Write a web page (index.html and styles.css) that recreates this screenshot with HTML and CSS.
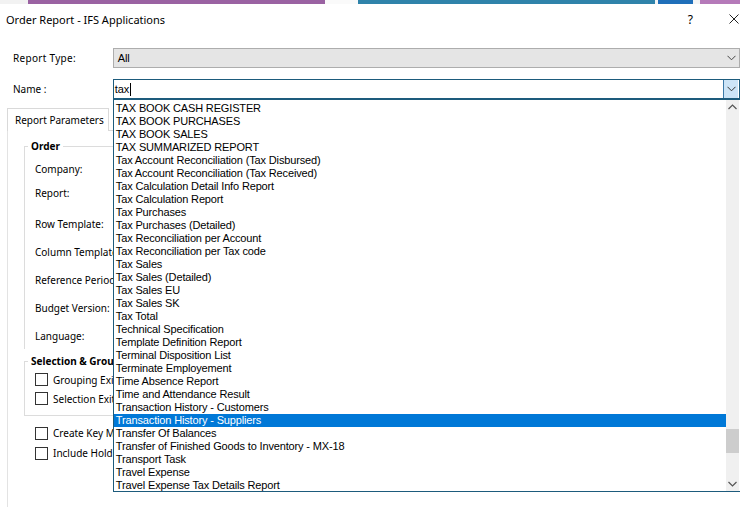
FILE: index.html
```html
<!DOCTYPE html>
<html>
<head>
<meta charset="utf-8">
<link rel="stylesheet" href="styles.css">
</head>
<body>
<div class="strip">
  <span class="seg s1"></span><span class="seg s2"></span><span class="seg s3"></span><span class="seg s4"></span><span class="seg s5"></span><span class="seg s6"></span><span class="seg s7"></span><span class="seg s8"></span>
</div>
<div class="titlebar">
  <span class="title">Order Report - IFS Applications</span>
  <span class="help">?</span>
  <svg class="close" width="10" height="10" viewBox="0 0 10 10"><path d="M0.5 0.5 L9.5 9.5 M9.5 0.5 L0.5 9.5" stroke="#222" stroke-width="1" fill="none"/></svg>
</div>
<div class="form">
  <div class="row row-type">
    <span class="lbl">Report Type:</span>
    <div class="combo combo-type">
      <span class="val">All</span>
      <svg class="chev" width="9" height="6" viewBox="0 0 9 6"><path d="M0.5 0.8 L4.5 4.8 L8.5 0.8" stroke="#444" stroke-width="1" fill="none"/></svg>
    </div>
  </div>
  <div class="row row-name">
    <span class="lbl">Name :</span>
    <div class="combo combo-name">
      <span class="val">tax<span class="caret"></span></span>
      <span class="dd-btn"><svg width="9" height="6" viewBox="0 0 9 6"><path d="M0.5 0.8 L4.5 4.8 L8.5 0.8" stroke="#333" stroke-width="1" fill="none"/></svg></span>
      <div class="list">
        <div class="items">
          <div class="item">TAX BOOK CASH REGISTER</div>
          <div class="item">TAX BOOK PURCHASES</div>
          <div class="item">TAX BOOK SALES</div>
          <div class="item">TAX SUMMARIZED REPORT</div>
          <div class="item">Tax Account Reconciliation (Tax Disbursed)</div>
          <div class="item">Tax Account Reconciliation (Tax Received)</div>
          <div class="item">Tax Calculation Detail Info Report</div>
          <div class="item">Tax Calculation Report</div>
          <div class="item">Tax Purchases</div>
          <div class="item">Tax Purchases (Detailed)</div>
          <div class="item">Tax Reconciliation per Account</div>
          <div class="item">Tax Reconciliation per Tax code</div>
          <div class="item">Tax Sales</div>
          <div class="item">Tax Sales (Detailed)</div>
          <div class="item">Tax Sales EU</div>
          <div class="item">Tax Sales SK</div>
          <div class="item">Tax Total</div>
          <div class="item">Technical Specification</div>
          <div class="item">Template Definition Report</div>
          <div class="item">Terminal Disposition List</div>
          <div class="item">Terminate Employement</div>
          <div class="item">Time Absence Report</div>
          <div class="item">Time and Attendance Result</div>
          <div class="item">Transaction History - Customers</div>
          <div class="item selected">Transaction History - Suppliers</div>
          <div class="item">Transfer Of Balances</div>
          <div class="item">Transfer of Finished Goods to Inventory - MX-18</div>
          <div class="item">Transport Task</div>
          <div class="item">Travel Expense</div>
          <div class="item">Travel Expense Tax Details Report</div>
        </div>
        <div class="scroll">
          <span class="arrow"><svg width="9" height="6" viewBox="0 0 9 6"><path d="M0.5 5 L4.5 1 L8.5 5" stroke="#555" stroke-width="1.2" fill="none"/></svg></span>
          <span class="track"><span class="thumb"></span></span>
          <span class="arrow"><svg width="9" height="6" viewBox="0 0 9 6"><path d="M0.5 1 L4.5 5 L8.5 1" stroke="#555" stroke-width="1.2" fill="none"/></svg></span>
        </div>
      </div>
    </div>
  </div>
</div>
<div class="tabs">
  <div class="tabstrip">
    <div class="tab">Report Parameters</div>
    <div class="tabline"></div>
  </div>
  <div class="panel">
    <fieldset class="group group-order">
      <legend>Order</legend>
      <div class="fields">
        <div class="field f-company">Company:</div>
        <div class="field f-report">Report:</div>
        <div class="field">Row Template:</div>
        <div class="field">Column Template:</div>
        <div class="field">Reference Period:</div>
        <div class="field">Budget Version:</div>
        <div class="field">Language:</div>
      </div>
    </fieldset>
    <fieldset class="group group-sel">
      <legend>Selection &amp; Grouping</legend>
      <div class="check"><span class="box"></span>Grouping Exits</div>
      <div class="check"><span class="box"></span>Selection Exits</div>
    </fieldset>
    <div class="check outer first"><span class="box"></span>Create Key Measures</div>
    <div class="check outer"><span class="box"></span>Include Hold Records</div>
  </div>
</div>
</body>
</html>
```

FILE: styles.css
```css
html, body {
  margin: 0;
  padding: 0;
}
body {
  width: 740px;
  height: 507px;
  overflow: hidden;
  background: #ffffff;
  font-family: "Noto Sans", "Open Sans", sans-serif;
  color: #000;
  position: relative;
}
.strip {
  display: flex;
  height: 4px;
}
.seg { display: block; height: 4px; }
.s1 { width: 28px; background: #f2f2f2; }
.s2 { width: 297px; background: #9a62a2; }
.s3 { width: 33px; background: #fafafa; }
.s4 { width: 297px; background: #2f83aa; }
.s5 { width: 3px; background: #f4f4f4; }
.s6 { width: 35px; background: #1f6fba; }
.s7 { width: 7px; background: #f4f4f4; }
.s8 { width: 40px; background: #b57ab9; }

.titlebar {
  height: 30px;
  display: flex;
  align-items: center;
  padding-left: 6px;
  font-size: 11px;
}
.title { flex: 1; }
.help {
  font-size: 12px;
  margin-right: 36px;
}
.close { margin-right: 1px; }

.form {
  padding-left: 13px;
}
.row {
  display: flex;
  align-items: center;
  height: 20px;
  font-size: 10px;
}
.row-type { margin-top: 14px; }
.row-name { margin-top: 11px; }
.lbl { width: 100px; }
.row-type .lbl { letter-spacing: 0.3px; }
.combo {
  box-sizing: border-box;
  width: 628px;
  height: 20px;
  display: flex;
  align-items: center;
  position: relative;
  font-family: "Liberation Sans", Arial, sans-serif;
  font-size: 11px;
  letter-spacing: -0.15px;
}
.combo-type {
  background: #e5e5e5;
  border: 1px solid #adadad;
}
.combo-type .val { flex: 1; padding-left: 4px; }
.combo-type .chev { margin-right: 3px; }
.combo-name {
  background: #fff;
  border: 1px solid #1d5b7c;
}
.combo-name .val { flex: 1; padding-left: 1px; display: flex; align-items: center; }
.caret {
  display: inline-block;
  width: 1px;
  height: 13px;
  background: #000;
  margin-left: 1px;
}
.dd-btn {
  box-sizing: border-box;
  width: 15px;
  height: 18px;
  margin-right: 1px;
  background: #cce4f7;
  border-left: 1px solid #3b79a8;
  display: flex;
  align-items: center;
  justify-content: center;
}
.list {
  position: absolute;
  top: 19px;
  left: -1px;
  width: 628px;
  height: 393px;
  box-sizing: border-box;
  border: 1px solid #1d5b7c;
  background: #fff;
  display: flex;
  z-index: 5;
}
.items {
  flex: 1;
  padding-top: 2px;
}
.item {
  height: 13px;
  line-height: 13px;
  padding-left: 2px;
  white-space: nowrap;
}
.item.selected {
  background: #0078d7;
  color: #fff;
}
.scroll {
  width: 13px;
  background: #f0f0f0;
  display: flex;
  flex-direction: column;
  margin-right: 1px;
}
.arrow {
  height: 14px;
  display: flex;
  align-items: center;
  justify-content: center;
}
.track {
  flex: 1;
  display: flex;
  flex-direction: column;
  justify-content: flex-end;
  padding-bottom: 24px;
}
.thumb {
  display: block;
  height: 24px;
  background: #cdcdcd;
}

.tabs {
  margin-top: 9px;
  margin-left: 7px;
  font-size: 10px;
}
.tabstrip {
  display: flex;
  height: 23px;
}
.tab {
  box-sizing: border-box;
  width: 102px;
  height: 23px;
  border: 1px solid #d9d9d9;
  border-bottom: none;
  padding-left: 7px;
  line-height: 22px;
  background: #fff;
}
.tabline {
  flex: 1;
  border-bottom: 1px solid #d9d9d9;
}
.panel {
  border-left: 1px solid #e3e3e3;
  height: 380px;
  padding-left: 16px;
  padding-top: 8px;
}
.group {
  margin: 0;
  width: 280px;
  border: 1px solid #dcdcdc;
  padding: 0 0 0 10px;
  min-width: 0;
}
.group legend {
  font-weight: bold;
  padding: 0 3px;
  margin-left: -7px;
  line-height: 14px;
}
.fields {
  display: flex;
  flex-direction: column;
  gap: 12px;
  padding-top: 8px;
  padding-bottom: 5px;
}
.field {
  height: 16px;
  line-height: 16px;
}
.f-company { margin-bottom: -4px; }
.f-report { margin-bottom: 3px; }
.group-order {
  border-bottom: none;
}
.group-sel {
  margin-top: 5px;
  padding-top: 2px;
  padding-bottom: 7px;
}
.check {
  display: flex;
  align-items: center;
  height: 19px;
}
.box {
  box-sizing: border-box;
  width: 13px;
  height: 13px;
  border: 1px solid #333;
  background: #fff;
  margin-right: 5px;
}
.outer {
  padding-left: 11px;
  height: 20px;
}
.outer.first { margin-top: 7px; }
```
